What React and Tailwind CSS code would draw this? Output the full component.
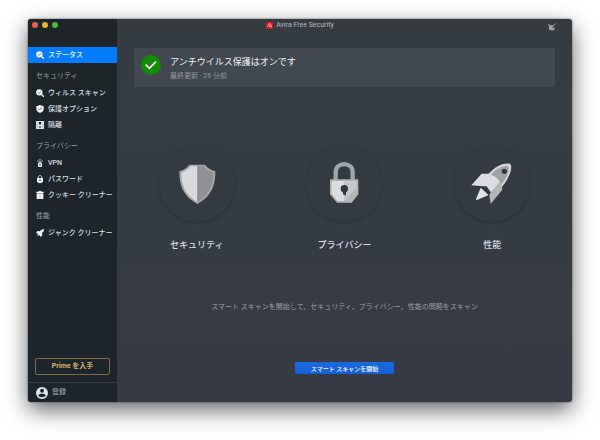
import React from 'react';

const ScanIcon = () => (
  <svg viewBox="0 0 24 24" className="h-2 w-2 shrink-0" aria-hidden="true">
    <circle cx="10" cy="10" r="9.500" fill="#f4f6f8" />
    <path d="M16 16l7 7" stroke="#f4f6f8" strokeWidth="4" strokeLinecap="round" />
    <path d="M5.500 10l3.500 3.500 6-7" fill="none" stroke="#38526b" strokeWidth="2" />
  </svg>
);

const ShieldIcon = () => (
  <svg viewBox="0 0 24 24" className="h-2 w-2 shrink-0" aria-hidden="true">
    <path d="M12 0l11 4v7c0 6-4 10.500-11 13C5 21.500 1 17 1 11V4z" fill="#f4f6f8" />
    <path d="M7 11l4 4 6-7" fill="none" stroke="#1d252b" strokeWidth="2" />
  </svg>
);

const QuarantineIcon = () => (
  <svg viewBox="0 0 24 24" className="h-2 w-2 shrink-0" aria-hidden="true">
    <path d="M0 0h24v24H0z" fill="#dfe3e6" />
    <path d="M4 2v20M20 2v20" stroke="#a3aab0" strokeWidth="1.500" />
    <path d="M9 3h6v6l-3 3-3-3zM10 20h4v-4h-4z" fill="#1d252b" />
  </svg>
);

const VpnIcon = () => (
  <svg viewBox="0 0 24 24" className="h-2 w-2 shrink-0" aria-hidden="true">
    <path d="M4 8c2-8 14-8 16 0M8 9c1-4 7-4 8 0" fill="none" stroke="#d5dade" strokeWidth="2" />
    <rect x="6" y="10" width="12" height="14" rx="4" fill="#f4f6f8" />
    <path d="M12 14v6" stroke="#1d252b" strokeWidth="3" />
  </svg>
);

const LockIcon = () => (
  <svg viewBox="0 0 24 24" className="h-2 w-2 shrink-0" aria-hidden="true">
    <path d="M7 11V6c0-6 10-6 10 0v5" fill="none" stroke="#f4f6f8" strokeWidth="2.500" />
    <path d="M3 9h18v10l-4 5H7l-4-5z" fill="#f4f6f8" />
    <path d="M12 13v6" stroke="#1d252b" strokeWidth="3" />
  </svg>
);

const TrashIcon = () => (
  <svg viewBox="0 0 24 24" className="h-2 w-2 shrink-0" aria-hidden="true">
    <path d="M1 2h7V0h8v2h7v4H1zM2 7h20v17H2z" fill="#f4f6f8" />
    <path d="M8 12h8M8 16h8M8 20h8" stroke="#a3aab0" strokeWidth="1.500" />
  </svg>
);

const RocketIcon = () => (
  <svg viewBox="0 0 24 24" className="h-2 w-2 shrink-0" aria-hidden="true">
    <path d="M24 0c-6 1-10 4-13 7L4 6 0 13l7 1-4 8 8-4 2 6 6-5-1-7c4-3 6-6 6-12z" fill="#f4f6f8" />
  </svg>
);

const sections = [
  {
    title: 'セキュリティ',
    items: [
      { label: 'ウィルス スキャン', Icon: ScanIcon },
      { label: '保護オプション', Icon: ShieldIcon },
      { label: '隔離', Icon: QuarantineIcon },
    ],
  },
  {
    title: 'プライバシー',
    items: [
      { label: 'VPN', Icon: VpnIcon },
      { label: 'パスワード', Icon: LockIcon },
      { label: 'クッキー クリーナー', Icon: TrashIcon },
    ],
  },
  {
    title: '性能',
    items: [{ label: 'ジャンク クリーナー', Icon: RocketIcon }],
  },
];

const NavItem = ({ label, Icon, active }) => (
  <a
    href="#"
    className={`flex h-4 items-center gap-1 px-2 text-[7px] font-medium whitespace-nowrap ${
      active ? 'bg-[#057cfb] text-[#e6f1ff]' : 'text-[#d8dde1]'
    }`}
  >
    <Icon />
    {label}
  </a>
);

const TitleBar = () => (
  <header className="flex h-7">
    <div className="w-[89px] bg-[#1d2529]">
      <div className="flex h-3 items-center gap-1 px-1">
        <button aria-label="閉じる" className="h-1.5 w-1.5 rounded-full bg-[#ee6157]" />
        <button aria-label="しまう" className="h-1.5 w-1.5 rounded-full bg-[#e5b432]" />
        <button aria-label="拡大" className="h-1.5 w-1.5 rounded-full bg-[#4fb936]" />
      </div>
    </div>
    <div className="flex h-3 flex-1 items-center justify-center gap-[3px]">
      <svg viewBox="0 0 24 24" className="h-[7px] w-[7px]" aria-hidden="true">
        <rect width="24" height="24" rx="5" fill="#e3101b" />
        <path d="M5 17l5-11h5l4 11h-4l-1-3H9" fill="none" stroke="#ffd9da" strokeWidth="2.500" />
      </svg>
      <h1 className="text-[7px] text-[#b4babf]">Avira Free Security</h1>
    </div>
    <div className="flex h-4 w-[89px] items-center justify-end px-4">
      <button aria-label="設定">
        <svg viewBox="0 0 24 24" className="block h-2 w-2" fill="none" aria-hidden="true">
          <path d="M2 7h14l-4 7 7-1v9H4z" fill="#9da4a9" />
          <path d="M10 14L23 2M0 5l5 1" stroke="#9da4a9" strokeWidth="3" />
        </svg>
      </button>
    </div>
  </header>
);

const Sidebar = () => (
  <aside className="flex w-[89px] shrink-0 flex-col bg-linear-to-b from-[#1d2529] to-[#1d252c]">
    <nav>
      <NavItem label="ステータス" Icon={ScanIcon} active />
      {sections.map((section) => (
        <section key={section.title} className="mt-[5px]">
          <h2 className="flex h-[17px] items-center px-2 text-[7px] text-[#9aa2a8]">{section.title}</h2>
          {section.items.map((item) => (
            <NavItem key={item.label} {...item} />
          ))}
        </section>
      ))}
    </nav>
    <div className="mt-auto px-[7px] pb-[7px]">
      <button className="flex h-[17px] w-full items-center justify-center rounded-[2px] border border-[#86683a] text-[7px] font-bold text-[#d9b26a]">
        Prime を入手
      </button>
    </div>
    <a href="#" className="flex h-5 items-center gap-1 border-t border-[#343e45] px-2 text-[7px] text-[#a3abb1]">
      <svg viewBox="0 0 24 24" className="h-3 w-3" aria-hidden="true">
        <circle cx="12" cy="12" r="12" fill="#dde4ec" />
        <circle cx="12" cy="7.500" r="3.800" fill="#1d252c" />
        <path d="M4.500 17c1-5 14-5 15 0-3 4.500-12 4.500-15 0z" fill="#1d252c" />
      </svg>
      登録
    </a>
  </aside>
);

const StatusCard = () => (
  <section className="flex items-start gap-[9px] bg-[#414850] px-[7px] pt-[7px] pb-1">
    <svg viewBox="0 0 60 60" className="h-5 w-5 shrink-0" aria-hidden="true">
      <circle cx="30" cy="30" r="30" fill="#138a08" />
      <path d="M14 29l11 11 20-20" fill="none" stroke="#fff" strokeWidth="5" />
    </svg>
    <div>
      <h2 className="text-[9px] leading-[14px] text-[#f2f4f6]">アンチウイルス保護はオンです</h2>
      <p className="text-[7px] leading-[14px] text-[#8f969d]">最終更新 · 26 分前</p>
    </div>
  </section>
);

const ShieldArt = () => (
  <svg viewBox="26 19 228 228" className="h-full w-full" aria-hidden="true">
    <path d="M117 75h47q10 14 31 20c1 44-14 77-54 98-40-21-55-54-54-98q20-6 30-20z" fill="#a4a8ac" />
    <path d="M141 80h-21q-9 13-27 19c0 38 12 67 48 88z" fill="#d9dadd" />
    <path d="M141 80h20q9 13 28 19c0 38-12 67-48 88z" fill="#8f9194" />
  </svg>
);

const PadlockArt = () => (
  <svg viewBox="49 19 228 228" className="h-full w-full" aria-hidden="true">
    <path d="M138 122V98c0-33 51-33 51 0v24" fill="none" stroke="#a1a6ab" strokeWidth="13" />
    <path d="M121 119h85v45l-20 25h-44l-21-25z" fill="#b0b4b7" />
    <path d="M126 124h38v60h-20l-18-22z" fill="#dcddde" />
    <path d="M164 124h37v38l-18 22h-19z" fill="#c5c8ca" />
    <path d="M164 184l37-40v18l-18 22z" fill="#b3b6b8" />
    <circle cx="164" cy="147" r="11" fill="#343940" />
    <path d="M160 152h9v16l-9-4z" fill="#343940" />
  </svg>
);

const RocketArt = () => (
  <svg viewBox="72 19 228 228" className="h-full w-full" aria-hidden="true">
    <path d="M174 104c20-22 43-36 65-32 9 4 4 24-3 38-6 14-15 27-25 38z" fill="#d3d5d7" />
    <path d="M182 105c18-18 34-27 51-26 6 4 2 20-4 32-5 11-12 20-19 28z" fill="#a0a3a5" />
    <circle cx="223" cy="95" r="8" fill="#343940" />
    <path d="M124 137l31-35 22 0c17 6 28 14 34 26l-26 32-7-8-8-12-11 0z" fill="#dcdde0" />
    <path d="M210 126c4 7 6 15 7 24l-35 43-4-28 5-8z" fill="#b4b7b9" />
    <path d="M153 147l19 19-32 13z" fill="#e1e3e7" stroke="#e1e3e7" strokeWidth="4" strokeLinejoin="round" />
  </svg>
);

const categories = [
  { label: 'セキュリティ', Art: ShieldArt },
  { label: 'プライバシー', Art: PadlockArt },
  { label: '性能', Art: RocketArt },
];

const Category = ({ label, Art }) => (
  <button className="flex flex-col items-center gap-[15px] text-[9px] leading-4 font-medium text-[#d9dde1]">
    <span className="h-[76px] w-[76px] rounded-full bg-[#343a42] shadow-[0_1px_3px_#2b3037]">
      <Art />
    </span>
    {label}
  </button>
);

const App = () => (
  <div className="flex min-h-screen bg-white px-7 pt-[19px] pb-[38px] font-[Roboto,'Noto_Sans_CJK_JP',sans-serif]">
    <div className="flex flex-1 flex-col overflow-hidden rounded-[3px] bg-linear-to-b from-[#343c42] to-[#363a44] shadow-[0_8px_22px_rgba(0,0,0,0.6),0_0_2px_rgba(0,0,0,0.6)]">
      <TitleBar />
      <div className="flex flex-1">
        <Sidebar />
        <main className="flex flex-1 flex-col pt-px pb-7">
          <div className="px-[17px]">
            <StatusCard />
          </div>
          <div className="mt-[59px] grid grid-cols-3 px-1.5">
            {categories.map((category) => (
              <Category key={category.label} {...category} />
            ))}
          </div>
          <p className="mt-[46px] text-center text-[7px] leading-4 text-[#9a9fa7]">
            スマート スキャンを開始して、セキュリティ、プライバシー、性能の問題をスキャン
          </p>
          <button className="mx-auto mt-auto flex h-3 items-center rounded-[1px] bg-linear-to-b from-[#1a6ae0] to-[#165fd4] px-4 text-[6px] font-medium text-white">
            スマート スキャンを開始
          </button>
        </main>
      </div>
    </div>
  </div>
);

export default App;
